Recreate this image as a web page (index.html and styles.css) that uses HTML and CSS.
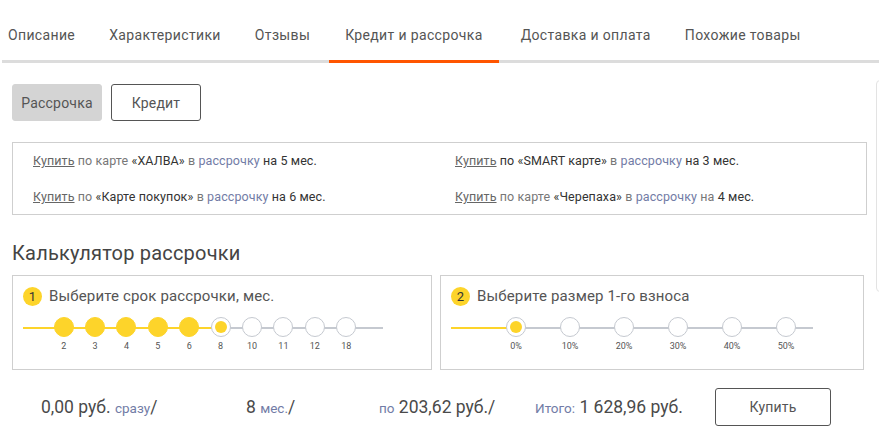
FILE: index.html
```html
<!DOCTYPE html>
<html lang="ru">
<head>
    <meta charset="UTF-8">
    <meta name="viewport" content="width=device-width, initial-scale=1.0">
    <title>Кредит и рассрочка</title>
    <link rel="stylesheet" href="styles.css">
</head>
<body>
    <div class="page">
        <div class="main">
            <ul class="tabs">
                <li class="tab tab-first">Описание</li>
                <li class="tab">Характеристики</li>
                <li class="tab">Отзывы</li>
                <li class="tab active">Кредит и рассрочка</li>
                <li class="tab">Доставка и оплата</li>
                <li class="tab">Похожие товары</li>
            </ul>

            <div class="switch">
                <button class="switch-btn selected">Рассрочка</button>
                <button class="switch-btn">Кредит</button>
            </div>

            <div class="offers">
                <p><a href="#">Купить</a> по карте <b>«ХАЛВА»</b> в <span class="blue">рассрочку</span> <b>на 5 мес.</b></p>
                <p><a href="#">Купить</a> <b>по «SMART карте»</b> в <span class="blue">рассрочку</span> <b>на 3 мес.</b></p>
                <p><a href="#">Купить</a> по <b>«Карте покупок»</b> в <span class="blue">рассрочку</span> <b>на 6 мес.</b></p>
                <p><a href="#">Купить</a> по карте <b>«Черепаха»</b> в <span class="blue">рассрочку</span> на <b>4 мес.</b></p>
            </div>

            <h2 class="calc-title">Калькулятор рассрочки</h2>

            <div class="calc">
                <div class="calc-card">
                    <div class="step"><span class="step-num">1</span>Выберите срок рассрочки, мес.</div>
                    <div class="slider slider-term">
                        <div class="track"></div>
                        <div class="track-fill" style="width: 197px"></div>
                        <div class="stops">
                            <div class="stop done"><span class="dot"></span><span class="label">2</span></div>
                            <div class="stop done"><span class="dot"></span><span class="label">3</span></div>
                            <div class="stop done"><span class="dot"></span><span class="label">4</span></div>
                            <div class="stop done"><span class="dot"></span><span class="label">5</span></div>
                            <div class="stop done"><span class="dot"></span><span class="label">6</span></div>
                            <div class="stop current"><span class="dot"></span><span class="label">8</span></div>
                            <div class="stop"><span class="dot"></span><span class="label">10</span></div>
                            <div class="stop"><span class="dot"></span><span class="label">11</span></div>
                            <div class="stop"><span class="dot"></span><span class="label">12</span></div>
                            <div class="stop"><span class="dot"></span><span class="label">18</span></div>
                        </div>
                    </div>
                </div>
                <div class="calc-card">
                    <div class="step"><span class="step-num">2</span>Выберите размер 1-го взноса</div>
                    <div class="slider slider-fee">
                        <div class="track"></div>
                        <div class="track-fill" style="width: 65px"></div>
                        <div class="stops">
                            <div class="stop current"><span class="dot"></span><span class="label">0%</span></div>
                            <div class="stop"><span class="dot"></span><span class="label">10%</span></div>
                            <div class="stop"><span class="dot"></span><span class="label">20%</span></div>
                            <div class="stop"><span class="dot"></span><span class="label">30%</span></div>
                            <div class="stop"><span class="dot"></span><span class="label">40%</span></div>
                            <div class="stop"><span class="dot"></span><span class="label">50%</span></div>
                        </div>
                    </div>
                </div>
            </div>

            <div class="summary">
                <div class="sum-item sum-first">0,00 руб. <small>сразу</small>/</div>
                <div class="sum-item sum-term">8 <small>мес.</small>/</div>
                <div class="sum-item sum-month"><small>по</small> 203,62 руб./</div>
                <div class="sum-item sum-total"><small>Итого:</small> 1&nbsp;628,96 руб.</div>
                <button class="buy-btn">Купить</button>
            </div>
        </div>
        <div class="side"></div>
    </div>
</body>
</html>
```

FILE: styles.css
```css
body {
    margin: 0;
    font-family: Roboto, "Noto Sans", sans-serif;
    color: #444;
    background: #fff;
    overflow: hidden;
}
.page {
    display: flex;
    width: 879px;
    height: 447px;
    overflow: hidden;
}
.main {
    width: 876px;
    flex-shrink: 0;
    padding-left: 2px;
    box-sizing: border-box;
}
.side {
    flex-shrink: 0;
    width: 200px;
    height: 210px;
    margin-top: 80px;
    border: 1px solid #e3e3e3;
    border-radius: 4px;
}

/* tabs */
.tabs {
    display: flex;
    list-style: none;
    margin: 0;
    padding: 0;
    width: 877px;
    height: 63px;
    border-bottom: 3px solid #dcdcdc;
    box-sizing: border-box;
    font-size: 14px;
    letter-spacing: 0.35px;
    color: #555;
}
.tab {
    padding: 0 17px;
    line-height: 70px;
    margin-bottom: -3px;
    border-bottom: 3px solid transparent;
}
.tab-first {
    padding-left: 6px;
}
.tab.active {
    margin: 0 5px -3px 2px;
    padding: 0 16px;
    border-bottom-color: #ff5500;
}

/* switch */
.switch {
    display: flex;
    gap: 9px;
    padding: 21px 0 0 10px;
}
.switch-btn {
    width: 90px;
    height: 37px;
    font-family: inherit;
    font-size: 14px;
    letter-spacing: 0.2px;
    color: #555;
    background: #fff;
    border: 1px solid #555;
    border-radius: 3px;
}
.switch-btn.selected {
    background: #d4d4d4;
    border-color: #d4d4d4;
}

/* offers */
.offers {
    display: grid;
    grid-template-columns: 422px 1fr;
    margin: 21px 10px 0 10px;
    width: 855px;
    box-sizing: border-box;
    height: 73px;
    padding: 8px 0 0 20px;
    border: 1px solid #cfcfcf;
    font-size: 12.5px;
    letter-spacing: 0.1px;
    color: #777;
}
.offers p {
    margin: 0;
    line-height: 20px;
    height: 36px;
}
.offers a {
    color: #666;
    text-decoration: underline;
}
.offers b {
    font-weight: 400;
    color: #333;
}
.blue {
    color: #727ca6;
}

/* calculator */
.calc-title {
    margin: 25px 0 0 10px;
    font-size: 20px;
    font-weight: 400;
    letter-spacing: 0.2px;
    color: #444;
    line-height: 26px;
}
.calc {
    display: flex;
    gap: 8px;
    margin: 9px 0 0 10px;
}
.calc-card {
    height: 95px;
    box-sizing: border-box;
    border: 1px solid #cfcfcf;
    padding: 10px 10px 0 10px;
}
.calc-card:first-child {
    width: 420px;
}
.calc-card:last-child {
    width: 424px;
}
.step {
    display: flex;
    align-items: center;
    font-size: 15px;
    letter-spacing: 0.15px;
    color: #555;
    height: 20px;
}
.step-num {
    width: 19px;
    height: 19px;
    border-radius: 50%;
    background: #fdd42a;
    color: #333;
    font-size: 13px;
    letter-spacing: 0;
    text-align: center;
    line-height: 19px;
    margin-right: 7px;
}

.slider {
    position: relative;
    width: 360px;
    margin-top: 11px;
    height: 40px;
}
.slider-fee {
    width: 362px;
}
.track,
.track-fill {
    position: absolute;
    left: 0;
    top: 10px;
    height: 2px;
    background: #c5c9d0;
}
.track {
    right: 0;
}
.track-fill {
    background: #fdd42a;
}
.stops {
    position: relative;
    display: flex;
}
.slider-term .stops {
    margin-left: 25px;
}
.slider-fee .stops {
    margin-left: 38px;
}
.stop {
    display: flex;
    flex-direction: column;
    align-items: center;
    width: 31.4px;
}
.slider-fee .stop {
    width: 54px;
}
.dot {
    width: 18px;
    height: 18px;
    border-radius: 50%;
    border: 1px solid #c5c9d0;
    background: #fff;
    position: relative;
}
.stop.done .dot {
    background: #fdd42a;
    border-color: #fdd42a;
}
.stop.current .dot::after {
    content: "";
    position: absolute;
    left: 3px;
    top: 3px;
    width: 12px;
    height: 12px;
    border-radius: 50%;
    background: #fdd42a;
}
.label {
    margin-top: 4px;
    font-size: 9px;
    color: #555;
}

/* summary */
.summary {
    display: flex;
    align-items: center;
    height: 64px;
    padding-top: 5px;
    font-size: 17.5px;
    color: #4a4a4a;
}
.summary small {
    font-size: 13.5px;
    color: #727ca6;
}
.sum-item {
    white-space: nowrap;
}
.sum-first {
    margin-left: 39px;
    width: 205px;
}
.sum-term {
    width: 133px;
}
.sum-month {
    width: 156px;
}
.sum-total {
    width: 180px;
}
.buy-btn {
    width: 116px;
    height: 38px;
    font-family: inherit;
    font-size: 14px;
    letter-spacing: 0.2px;
    color: #555;
    background: #fff;
    border: 1px solid #555;
    border-radius: 3px;
}
```
